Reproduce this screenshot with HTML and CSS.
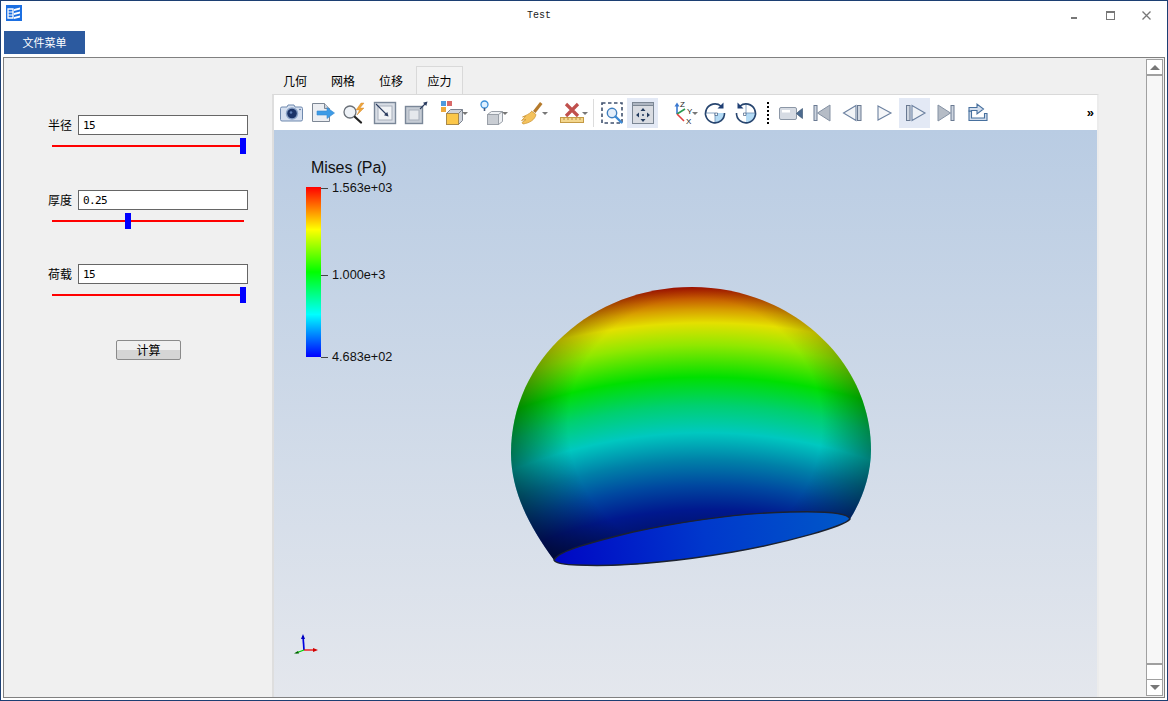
FILE: index.html
```html
<!DOCTYPE html>
<html lang="zh">
<head>
<meta charset="utf-8">
<title>Test</title>
<link rel="stylesheet" href="styles.css">
</head>
<body>
<div class="window">
  <header class="titlebar">
    <svg class="appicon" viewBox="0 0 16 16"><rect width="16" height="16" fill="#1b6fe2"/><path d="M2 4h5v9H2z" fill="none" stroke="#fff" stroke-width="1.3"/><path d="M2 7h5M2 10h5" stroke="#fff"/><path d="M8 4l6-1.500v2L8 6zM8 8l6-1.500v2L8 10zM8 12l6-1.500v2L8 14z" fill="#fff"/></svg>
    <span class="title">Test</span>
    <div class="winctl">
      <span class="winbtn"><i class="win-min"></i></span>
      <span class="winbtn"><i class="win-max"></i></span>
      <span class="winbtn"><svg width="9" height="9" viewBox="0 0 9 9"><path d="M.5.500l8 8M8.500.500l-8 8" stroke="#777" stroke-width="1.300"/></svg></span>
    </div>
  </header>
  <nav class="menubar"><span class="menubtn">文件菜单</span></nav>
  <main class="main">
    <aside class="params">
      <div class="field field--first">
        <div class="row"><label class="lbl">半径</label><input class="txt" value="15"></div>
        <div class="slider"><span class="thumb" style="left:188px"></span></div>
      </div>
      <div class="field">
        <div class="row"><label class="lbl">厚度</label><input class="txt" value="0.25"></div>
        <div class="slider"><span class="thumb" style="left:73px"></span></div>
      </div>
      <div class="field">
        <div class="row"><label class="lbl">荷载</label><input class="txt" value="15"></div>
        <div class="slider"><span class="thumb" style="left:188px"></span></div>
      </div>
      <button class="calc">计算</button>
    </aside>
    <section class="workspace">
      <div class="tabs">
        <span class="tab">几何</span><span class="tab">网格</span><span class="tab">位移</span><span class="tab tab--on">应力</span>
      </div>
      <div class="pane">
        <div class="toolbar">
          <span class="tb"><svg class="ic" viewBox="0 0 28 28"><path d="M4 8h5l1-2h6l1 2h6a1.500 1.500 0 0 1 1.500 1.500v11A1.500 1.500 0 0 1 23 22H4a1.500 1.500 0 0 1-1.500-1.500v-11A1.500 1.500 0 0 1 4 8z" fill="#d6e0f0" stroke="#6f89ae"/><circle cx="14" cy="14.500" r="6.200" fill="#8aa2c6"/><circle cx="14" cy="14.500" r="4.800" fill="#1c3468"/><circle cx="13" cy="13.500" r="1.300" fill="#5f7fb5"/><circle cx="22" cy="10.500" r=".8" fill="#44618f"/></svg></span>
          <span class="tb"><svg class="ic" viewBox="0 0 28 28"><path d="M3.500 4.500h12l5 5v13h-17z" fill="#eceef2" stroke="#7d8794"/><path d="M15.500 4.500v5h5" fill="#ccd2da" stroke="#7d8794"/><path d="M8 12h10V8.500l7.500 5.500-7.500 5.500V16H8z" fill="#3d9be6" stroke="#3b8ad0" stroke-width=".6"/></svg></span>
          <span class="tb"><svg class="ic" viewBox="0 0 28 28"><circle cx="10" cy="13" r="6" fill="#eef2f7" stroke="#6a7078" stroke-width="1.300"/><path d="M15 18l6 5.500" stroke="#222" stroke-width="2.300" stroke-linecap="round"/><path d="M21 4l-5 7h3.500l-2.500 5 7-7h-4l4-5z" fill="#f0a63a" stroke="#c9822a" stroke-width=".4"/></svg></span>
          <span class="tb"><svg class="ic" viewBox="0 0 28 28"><rect x="3.500" y="3.500" width="21" height="21" fill="#d8dde5" stroke="#7a8798" stroke-width="1.400"/><rect x="7" y="7" width="14" height="14" fill="#f1f3f6" stroke="#a7afbb"/><path d="M5 5l11 11" stroke="#2c3d60" stroke-width="1.100"/><path d="M17.500 17.500l-4.500-1.200 3.300-3.300z" fill="#2c3d60"/></svg></span>
          <span class="tb"><svg class="ic" viewBox="0 0 28 28"><rect x="3.500" y="7.500" width="17" height="17" fill="#c6ccd5" stroke="#7a8798" stroke-width="1.400"/><rect x="7" y="11" width="10" height="10" fill="#e5e8ec" stroke="#a7afbb"/><path d="M18 10l6-6" stroke="#2c3d60" stroke-width="1.100"/><path d="M25.500 2.500l-1.200 4.500-3.300-3.300z" fill="#2c3d60"/></svg></span>
          <span class="tb tb--drop tb--lead"><svg class="ic" viewBox="0 0 28 28"><rect x="3" y="2" width="5" height="5" fill="#4e9adf"/><rect x="9" y="2" width="5" height="5" fill="#d96a6a"/><rect x="3" y="8" width="5" height="5" fill="#eda93c"/><path d="M8.500 14.500l4-4h12v11l-4 4h-12z" fill="#cfd3da" stroke="#7b8390"/><rect x="8.500" y="14.500" width="12" height="11" fill="#fbc74a" stroke="#a9894a"/><path d="M20.500 14.500l4-4" stroke="#7b8390"/></svg><i class="caret"></i></span>
          <span class="tb tb--drop"><svg class="ic" viewBox="0 0 28 28"><circle cx="6.500" cy="5.500" r="3.500" fill="#dff0ff" stroke="#3c8fd8" stroke-width="1.300"/><path d="M6.500 9v3" stroke="#4a5a78" stroke-width="1.600"/><path d="M9.500 15.500l4-3h11v10l-4 3h-11z" fill="#eef0f3" stroke="#9aa0a8"/><rect x="9.500" y="15.500" width="11" height="10" fill="#c9cdd3" stroke="#9aa0a8"/><path d="M20.500 15.500l4-3" stroke="#9aa0a8"/></svg><i class="caret"></i></span>
          <span class="tb tb--drop"><svg class="ic" viewBox="0 0 28 28"><path d="M22 3l2.500 2-7 9-2.500-2z" fill="#b57a2c"/><path d="M13.500 12l4.500 3.500c-1 5-6 8.500-13 9.500l-1-1.500 4-3-4.500 1 4-4-3 .5c3-1.500 7-3 9-5.500z" fill="#f4c25c" stroke="#c8912f" stroke-width=".7"/></svg><i class="caret"></i></span>
          <span class="tb tb--drop"><svg class="ic" viewBox="0 0 28 28"><path d="M8 5l12 12M20 5L8 17" stroke="#c0504d" stroke-width="3.200"/><rect x="2.500" y="18.500" width="23" height="5" fill="#f3d68d" stroke="#c49a45"/><path d="M6 19v2M10 19v2M14 19v2M18 19v2M22 19v2" stroke="#b9903f"/></svg><i class="caret"></i></span>
          <span class="sep"></span>
          <span class="tb"><svg class="ic" viewBox="0 0 28 28"><rect x="4" y="4" width="20" height="20" fill="none" stroke="#40526f" stroke-width="1.600" stroke-dasharray="3.500 2.500"/><circle cx="14" cy="14" r="4.700" fill="#e4eefa" stroke="#3f7fc0" stroke-width="1.400"/><path d="M17.500 17.500l6 6" stroke="#3c8ad6" stroke-width="2.400" stroke-linecap="round"/></svg></span>
          <span class="tb tb--on"><svg class="ic" viewBox="0 0 28 28"><rect x="3.500" y="3.500" width="21" height="21" fill="#d9dce2" stroke="#7c8794"/><rect x="3.500" y="3.500" width="21" height="3" fill="#aeb6c2" stroke="#7c8794"/><path d="M14 9l2.500 3h-5zM14 23l2.500-3h-5zM7 16l3-2.500v5zM21 16l-3-2.500v5z" fill="#223a5e"/><circle cx="14" cy="16" r="1" fill="#223a5e"/></svg></span>
          <span class="tb tb--axes"><svg class="ic" viewBox="0 0 28 28"><path d="M9 15V7" stroke="#3a78d0" stroke-width="1.600"/><path d="M9 15l8-5" stroke="#2a9a50" stroke-width="1.600"/><path d="M9 15l7 7" stroke="#e04040" stroke-width="1.600"/><path d="M9 3.500l2.500 4h-5z" fill="#3a78d0"/><text class="axt" x="12" y="8">Z</text><text class="axt" x="19" y="15">Y</text><text class="axt" x="18" y="25">X</text></svg><i class="caret"></i></span>
          <span class="tb"><svg class="ic" viewBox="0 0 28 28"><path d="M14 14h9.500A9.500 9.500 0 0 1 14 23.500z" fill="#b4dbf5"/><path d="M4.500 14H14v9.500" fill="none" stroke="#6d8fb5" stroke-width=".8"/><path d="M14 14h2.500v2.500H14z" fill="#fff" stroke="#27456f" stroke-width=".6"/><path d="M20 7A9.500 9.500 0 1 0 23.500 14" fill="none" stroke="#27456f" stroke-width="1.600"/><path d="M22.500 3.500V9.500h-6z" fill="#1f3f74"/></svg></span>
          <span class="tb"><svg class="ic" viewBox="0 0 28 28"><path d="M14 14h9.500A9.500 9.500 0 0 1 14 23.500z" fill="#b4dbf5"/><path d="M23.500 14H14V4.500" fill="none" stroke="#6d8fb5" stroke-width=".8"/><path d="M14 14h-2.500v2.500H14z" fill="#fff" stroke="#27456f" stroke-width=".6"/><path d="M8 7A9.500 9.500 0 1 1 4.500 14" fill="none" stroke="#27456f" stroke-width="1.600"/><path d="M5.500 3.500V9.500h6z" fill="#1f3f74"/></svg></span>
          <span class="dots"></span>
          <span class="tb"><svg class="ic" viewBox="0 0 28 28"><rect x="2.500" y="8.500" width="17" height="12" rx="1.500" fill="#d6dbe3" stroke="#8c97a6"/><rect x="5" y="11" width="8" height="2.500" fill="#fff"/><path d="M19.500 14.500l2-2 4-3v10l-4-3z" fill="#4c6a8e" stroke="#34506f" stroke-width=".6"/></svg></span>
          <span class="tb"><svg class="ic" viewBox="0 0 28 28"><rect x="6" y="6.500" width="3" height="15" fill="#cfd6e0" stroke="#6a7a92"/><path d="M9.500 14L22 6v16z" fill="#b5bcc6" stroke="#8592a4"/></svg></span>
          <span class="tb"><svg class="ic" viewBox="0 0 28 28"><path d="M4.500 14L17 6.500v15z" fill="#f2f4f7" stroke="#6c81a0" stroke-width="1.100"/><rect x="18.500" y="6.500" width="3.500" height="15" fill="#cfd6e0" stroke="#6a7a92"/></svg></span>
          <span class="tb"><svg class="ic" viewBox="0 0 28 28"><path d="M8 7l13 7-13 7z" fill="#f5f6f8" stroke="#6c81a0" stroke-width="1.100"/></svg></span>
          <span class="tb tb--on"><svg class="ic" viewBox="0 0 28 28"><rect x="5.500" y="6.500" width="3.500" height="15" fill="#cfd6e0" stroke="#6a7a92"/><path d="M11 6.500L24 14l-13 7.500z" fill="#eef1f6" stroke="#6c81a0" stroke-width="1.100"/></svg></span>
          <span class="tb"><svg class="ic" viewBox="0 0 28 28"><path d="M6 6l12.500 8L6 22z" fill="#b5bcc6" stroke="#8592a4"/><rect x="19" y="6.500" width="3" height="15" fill="#cfd6e0" stroke="#6a7a92"/></svg></span>
          <span class="tb"><svg class="ic" viewBox="0 0 28 28"><path d="M6 12v9.500h18v-7h-2.500v4.500H8.500v-7z" fill="#d3deed" stroke="#47709e" stroke-width="1.100"/><path d="M6 12V8.500h8V5l6.500 5-6.500 5v-3.500H8.500V12z" fill="#d3deed" stroke="#47709e" stroke-width="1.100"/></svg></span>
          <span class="more">»</span>
        </div>
        <div class="view">
          <svg class="scene" viewBox="274 130 823 567" width="823" height="567">
            <defs>
              <radialGradient id="shell" gradientUnits="userSpaceOnUse" cx="705" cy="950" r="670">
                <stop offset=".575" stop-color="#000c40"/>
                <stop offset=".612" stop-color="#001060"/>
                <stop offset=".657" stop-color="#00188e"/>
                <stop offset=".694" stop-color="#0048a0"/>
                <stop offset=".731" stop-color="#0080a8"/>
                <stop offset=".772" stop-color="#00c8c0"/>
                <stop offset=".813" stop-color="#00d070"/>
                <stop offset=".855" stop-color="#00e000"/>
                <stop offset=".903" stop-color="#90e800"/>
                <stop offset=".936" stop-color="#e4e000"/>
                <stop offset=".955" stop-color="#d8a000"/>
                <stop offset=".970" stop-color="#c86400"/>
                <stop offset=".99" stop-color="#a81000"/>
              </radialGradient>
              <radialGradient id="shade" gradientUnits="userSpaceOnUse" cx="695" cy="425" r="195">
                <stop offset=".65" stop-color="#000" stop-opacity="0"/>
                <stop offset="1" stop-color="#000" stop-opacity=".5"/>
              </radialGradient>
              <linearGradient id="inner" gradientUnits="userSpaceOnUse" x1="560" y1="560" x2="850" y2="515">
                <stop offset="0" stop-color="#0008c4"/>
                <stop offset=".5" stop-color="#0038cc"/>
                <stop offset="1" stop-color="#0058c8"/>
              </linearGradient>
            </defs>
            <path d="M554 560C528 525 511 490 511 453C511 360 592 287 692 287C790 287 871 360 871 450C871 475 862 500 850 519C810 540 720 556 650 563C610 567 570 567 554 560z" fill="url(#shell)"/>
            <path d="M554 560C528 525 511 490 511 453C511 360 592 287 692 287C790 287 871 360 871 450C871 475 862 500 850 519C810 540 720 556 650 563C610 567 570 567 554 560z" fill="url(#shade)"/>
            <path d="M554 560C558 552 580 545 633 532C680 522 740 513 790 512C825 511 848 513 850 519C845 526 790 542 733 552C680 561 620 567 577 565C565 565 555 563 554 560z" fill="url(#inner)" stroke="#1c2230" stroke-width="1.400"/>
          </svg>
          <div class="legend">
            <div class="legend-title">Mises (Pa)</div>
            <div class="legend-body">
              <div class="legend-bar"></div>
              <div class="legend-ticks">
                <div class="tick"><i></i>1.563e+03</div>
                <div class="tick tick--mid"><i></i>1.000e+3</div>
                <div class="tick"><i></i>4.683e+02</div>
              </div>
            </div>
          </div>
          <svg class="axes" width="30" height="30" viewBox="0 0 30 30"><path d="M12 17L11 3" stroke="#0000e0" stroke-width="1.700"/><path d="M9 6l2-5 2 5z" fill="#0000c0"/><path d="M12 17h11" stroke="#f00000" stroke-width="1.300"/><path d="M21 15l5 2-5 2z" fill="#d00000"/><path d="M12 17L4 20" stroke="#00d000" stroke-width="1.300"/><path d="M6 18l-4 2.500 5 0z" fill="#006000"/></svg>
        </div>
      </div>
    </section>
    <div class="vscroll">
      <span class="sbtn"><i class="arr-up"></i></span>
      <span class="strack"></span>
      <span class="sthumb"></span>
      <span class="sbtn sbtn--down"><i class="arr-down"></i></span>
    </div>
  </main>
</div>
</body>
</html>
```

FILE: styles.css
```css
* { box-sizing: border-box; }
html, body { margin: 0; padding: 0; }
body {
  width: 1168px;
  height: 701px;
  overflow: hidden;
  background: #fff;
  font-family: "Noto Sans CJK SC", "Liberation Sans", sans-serif;
  font-size: 12px;
  color: #000;
}
.window {
  height: 701px;
  border: 1px solid #1c3f73;
  padding: 0 2px 2px;
  display: flex;
  flex-direction: column;
  background: #fff;
}
.titlebar {
  height: 30px;
  flex: none;
  position: relative;
  display: flex;
  align-items: flex-start;
}
.appicon { width: 16px; height: 16px; margin: 4px 0 0 3px; }
.title {
  position: absolute;
  left: 524px;
  top: 8px;
  font: 10px/14px "Liberation Mono", monospace;
  color: #222;
}
.winctl { margin-left: auto; display: flex; padding-right: 1px; }
.winbtn {
  width: 36px;
  height: 18px;
  margin-top: 5px;
  display: flex;
  align-items: center;
  justify-content: center;
}
.win-min { width: 6px; height: 2px; background: #777; margin-top: 6px; }
.win-max { width: 9px; height: 9px; border: 1px solid #777; border-top-width: 2px; }
.menubar { height: 26px; flex: none; padding-left: 1px; }
.menubtn {
  display: block;
  width: 81px;
  height: 23px;
  background: #2c5a9f;
  color: #fff;
  font-size: 11px;
  line-height: 23px;
  text-align: center;
}
.main {
  flex: 1;
  min-height: 0;
  border: 1px solid #808080;
  background: #f0f0f0;
  display: flex;
}
.params {
  width: 267px;
  flex: none;
  padding: 57px 0 0 44px;
  display: flex;
  flex-direction: column;
  gap: 35px;
}
.field { width: 200px; }
.field--first { margin-bottom: 1px; }
.row { display: flex; align-items: center; gap: 6px; }
.lbl { width: 24px; flex: none; font-size: 12px; line-height: 20px; }
.txt {
  width: 170px;
  height: 20px;
  border: 1px solid #666;
  background: #fff;
  padding: 0 4px;
  margin: 0;
  border-radius: 0;
  outline: none;
  font: 11px/18px "DejaVu Sans Mono", monospace;
  letter-spacing: -.6px;
  color: #000;
}
.slider {
  position: relative;
  height: 19px;
  width: 192px;
  margin-left: 4px;
}
.slider::before {
  content: "";
  display: block;
  position: absolute;
  left: 0;
  right: 0;
  top: 10px;
  height: 2px;
  background: #f00;
}
.thumb {
  position: absolute;
  top: 3px;
  width: 6px;
  height: 16px;
  background: #00f;
}
.calc {
  align-self: flex-start;
  margin: 2px 0 0 68px;
  width: 65px;
  height: 20px;
  padding: 0;
  border: 1px solid #8a8a8a;
  border-radius: 2px;
  background: linear-gradient(#f0f0f0 50%, #d5d5d5 50%);
  font: 12px/18px "Noto Sans CJK SC", sans-serif;
  color: #000;
}
.workspace {
  width: 829px;
  flex: none;
  padding-top: 8px;
  display: flex;
  flex-direction: column;
}
.tabs { display: flex; height: 28px; flex: none; }
.tab {
  width: 48px;
  text-align: center;
  line-height: 29px;
  color: #000;
  font-size: 12px;
}
.tab--on {
  background: #f3f3f3;
  border: 1px solid #d9d9d9;
  border-bottom: 0;
  line-height: 28px;
  margin-left: 1px;
  width: 47px;
}
.pane {
  flex: 1;
  min-height: 0;
  margin-left: 1px;
  width: 827px;
  border-top: 1px solid #d9d9d9;
  border-left: 2px solid #dedede;
  border-right: 2px solid #ececec;
  display: flex;
  flex-direction: column;
}
.toolbar {
  height: 35px;
  flex: none;
  background: #fff;
  display: flex;
  align-items: flex-start;
  padding: 3px 3px 0 2px;
}
.tb {
  width: 31px;
  height: 30px;
  flex: none;
  display: flex;
  align-items: center;
  justify-content: center;
}
.tb--on { background: #e3e9f5; }
.tb--drop { width: 40px; justify-content: flex-start; padding-left: 6px; }
.tb--lead { margin-left: 1px; }
.tb--axes { width: 37px; margin-left: 4px; justify-content: flex-start; padding-left: 6px; }
.ic { width: 28px; height: 28px; flex: none; }
.axt { font: 8px "Liberation Sans", sans-serif; fill: #222; }
.caret {
  width: 0;
  height: 0;
  flex: none;
  margin-left: -4px;
  border-left: 3px solid transparent;
  border-right: 3px solid transparent;
  border-top: 3px solid #777;
}
.sep { width: 1px; height: 28px; margin: 1px 2px 0 1px; background: #dcdcdc; flex: none; }
.dots {
  width: 2px;
  height: 24px;
  margin: 4px 6px 0;
  flex: none;
  background: repeating-linear-gradient(#000 0 2px, transparent 2px 4px);
}
.more {
  margin-left: auto;
  font: bold 13px/30px "Liberation Sans", sans-serif;
  color: #000;
}
.view {
  flex: 1;
  min-height: 0;
  position: relative;
  background: linear-gradient(#b9cce3, #e4e7ed);
  overflow: hidden;
}
.scene { display: block; position: absolute; left: 0; top: 0; }
.legend {
  position: absolute;
  left: 32px;
  top: 28px;
  font-family: "Liberation Sans", sans-serif;
  color: #111;
}
.legend-title { font-size: 16px; line-height: 20px; margin-left: 5px; height: 29px; letter-spacing: -.1px; }
.legend-body { display: flex; height: 170px; }
.legend-bar {
  width: 15px;
  background: linear-gradient(#f00 0, #ff0 25%, #0f0 50%, #0ff 75%, #00f 100%);
}
.legend-ticks {
  display: flex;
  flex-direction: column;
  justify-content: space-between;
  margin: -7px 0 -8px;
  font-size: 12.7px;
  line-height: 16px;
}
.tick { display: flex; align-items: center; }
.tick--mid { margin-top: 5px; }
.tick i { width: 7px; height: 1px; background: #444; margin-right: 4px; }
.axes { position: absolute; left: 18px; top: 503px; }
.vscroll {
  width: 17px;
  flex: none;
  margin: 1px 0 1px 46px;
  display: flex;
  flex-direction: column;
  border: 1px solid #a0a0a0;
  background: #f7f7f7;
}
.sbtn {
  height: 16px;
  flex: none;
  background: #fff;
  border-bottom: 2px solid #a0a0a0;
  display: flex;
  align-items: center;
  justify-content: center;
}
.sbtn--down { border-bottom: 0; border-top: 1px solid #a0a0a0; }
.strack { flex: 1; min-height: 0; }
.sthumb { height: 16px; flex: none; background: #fff; border-top: 2px solid #a0a0a0; }
.arr-up, .arr-down { width: 0; height: 0; border-left: 5px solid transparent; border-right: 5px solid transparent; }
.arr-up { border-bottom: 5px solid #777; }
.arr-down { border-top: 5px solid #777; }
```
